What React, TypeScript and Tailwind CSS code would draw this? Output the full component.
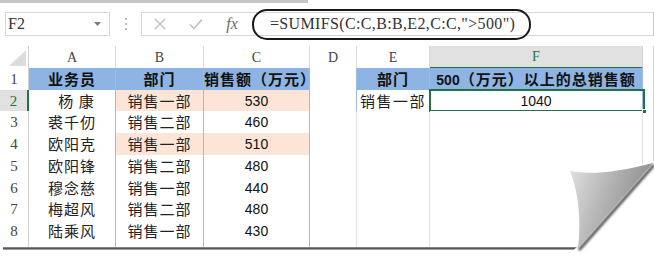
import React from "react";

const serif = "font-['Liberation_Serif','Times_New_Roman',serif]";
const sans = "font-['Liberation_Sans',Arial,sans-serif]";
const cjk = "font-['Noto_Sans_CJK_SC','Noto_Sans_CJK_JP',sans-serif]";
const GRID = "grid grid-cols-[29px_87px_88px_106px_47px_73px_213px_11px]";

const BLUE = "border-r border-b border-[#9cbce3]";
const GRAY = "border-r border-b border-[#e1e1e1]";
const DBLUE = "border-r border-b border-r-[#9cbce3] border-b-[#e1e1e1]";
const RH = "border-r border-b border-r-[#d0d0d0] border-b-[#e1e1e1]";
const GCOL = "border-r border-b border-r-[#d0d0d0] border-b-[#e1e1e1]";

type Row = {
  n: string;
  h: string;
  a: string;
  b: string;
  c: string;
  e?: string;
  f?: string;
  head?: boolean;
  peach?: boolean;
  aPad?: string;
};

const rows: Row[] = [
  { n: "1", h: "h-[22px]", a: "业务员", b: "部门", c: "销售额（万元）", e: "部门", f: "500（万元）以上的总销售额", head: true },
  { n: "2", h: "h-[21px]", a: "杨 康", b: "销售一部", c: "530", e: "销售一部", f: "1040", peach: true, aPad: "pl-[9px]" },
  { n: "3", h: "h-[22px]", a: "裘千仞", b: "销售二部", c: "460" },
  { n: "4", h: "h-[22px]", a: "欧阳克", b: "销售一部", c: "510", peach: true },
  { n: "5", h: "h-[22px]", a: "欧阳锋", b: "销售二部", c: "480" },
  { n: "6", h: "h-[21px]", a: "穆念慈", b: "销售一部", c: "440" },
  { n: "7", h: "h-[22px]", a: "梅超风", b: "销售二部", c: "480" },
  { n: "8", h: "h-[22px]", a: "陆乘风", b: "销售一部", c: "430" },
  { n: "", h: "h-[22px]", a: "", b: "", c: "" },
];

function DataRow({ r }: { r: Row }) {
  const isSel = r.n === "2";
  const inE = r.n === "1" || r.n === "2";
  const cellText = r.head
    ? `${cjk} text-[15px] font-bold tracking-[1px] text-[#111]`
    : `${cjk} text-[15px] tracking-[1px] text-[#222]`;
  const aBg = r.head ? "bg-[#8db4e2]" : "bg-white";
  const bcBg = r.head ? "bg-[#8db4e2]" : r.peach ? "bg-[#fce4d6]" : "bg-white";
  return (
    <div className={`${GRID} ${r.h}`}>
      <div
        className={
          isSel
            ? `border-b border-b-[#e1e1e1] border-r-2 border-r-[#217346] bg-[#e1e1e1] flex items-center justify-center ${serif} text-[15px] text-[#217346]`
            : `${RH} bg-white flex items-center justify-center ${serif} text-[15px] text-[#444]`
        }
      >
        {r.n}
      </div>
      <div className={`${BLUE} ${aBg} flex items-center justify-center ${cellText} ${r.aPad ?? ""} whitespace-pre`}>{r.a}</div>
      <div className={`${BLUE} ${bcBg} flex items-center justify-center ${cellText}`}>{r.b}</div>
      <div
        className={`${BLUE} ${bcBg} flex items-center justify-center ${
          r.head ? cellText : `${sans} text-[14px] text-[#111]`
        }`}
      >
        {r.c}
      </div>
      <div className={`${inE ? DBLUE : GRAY} bg-white`} />
      <div
        className={`${inE ? BLUE : GRAY} ${r.head ? "bg-[#8db4e2]" : "bg-white"} flex items-center justify-center ${
          r.head ? cellText : `${cjk} text-[15px] tracking-[1.5px] text-[#222]`
        }`}
      >
        {r.e ?? ""}
      </div>
      <div
        className={`${inE ? BLUE : GRAY} ${r.head ? "bg-[#8db4e2]" : "bg-white"} relative flex items-center justify-center ${
          r.head ? cellText : `${sans} text-[14px] text-[#111]`
        }`}
      >
        {r.head ? (
          <span>
            <span className={`${sans} text-[14px] font-bold tracking-normal`}>500</span>（万元）以上的总销售额
          </span>
        ) : (
          r.f ?? ""
        )}
        {isSel && (
          <div className="absolute left-[-1px] top-[-1px] w-[216px] h-[23px] border-2 border-[#217346]">
            <div className="absolute right-[-4px] bottom-[-4px] w-[5px] h-[5px] bg-[#217346] border border-white" />
          </div>
        )}
      </div>
      <div className={`${GCOL} bg-white`} />
    </div>
  );
}

export default function App() {
  const colHdr = `flex items-center justify-center ${serif} text-[14px] text-[#444] border-r border-r-[#d9d9d9]`;
  return (
    <div className="relative w-[654px] h-[257px] bg-white overflow-hidden">
      <div className="h-[247px] overflow-hidden">
        <div className="h-[3px] w-[308px] bg-[#c6c6c6]" />
        {/* toolbar */}
        <div className="flex h-[24px] mt-[9px]">
          <div className="ml-[5px] w-[105px] h-full border border-[#d6d6d6] flex items-center justify-between pl-[2px] pr-[8px]">
            <span className={`${serif} text-[16px] text-[#333]`}>F2</span>
            <svg width="7" height="4" viewBox="0 0 7 4">
              <polygon points="0,0 7,0 3.5,4" fill="#7a7a7a" />
            </svg>
          </div>
          <div className="w-[31px] flex flex-col items-center justify-center gap-[3px]">
            <div className="w-[2px] h-[2px] bg-[#bdbdbd]" />
            <div className="w-[2px] h-[2px] bg-[#bdbdbd]" />
            <div className="w-[2px] h-[2px] bg-[#bdbdbd]" />
          </div>
          <div className="relative flex-1 h-full border border-[#d6d6d6] border-r-[#c8c8c8] flex items-center">
            <div className="w-[36px] flex justify-center">
              <svg width="12" height="12" viewBox="0 0 12 12">
                <path d="M1 1 L11 11 M11 1 L1 11" stroke="#bcbcbc" strokeWidth="1.3" />
              </svg>
            </div>
            <div className="w-[36px] flex justify-center">
              <svg width="14" height="12" viewBox="0 0 14 12">
                <path d="M1 6.5 L5 10.5 L13 1.5" stroke="#bcbcbc" strokeWidth="1.5" fill="none" />
              </svg>
            </div>
            <div className={`w-[36px] flex justify-center ${serif} italic text-[16px] text-[#6a6a6a]`}>fx</div>
            <div className={`ml-[20px] ${serif} text-[16px] tracking-[0.35px] text-[#333] whitespace-pre`}>
              =SUMIFS(C:C,B:B,E2,C:C,"&gt;500")
            </div>
            <div className="absolute left-[110px] top-[-4px] w-[279px] h-[31px] rounded-[15px] border-2 border-[#1a1a1a]" />
          </div>
        </div>
        {/* column header */}
        <div className={`${GRID} h-[22px] mt-[10px]`}>
          <div className="border-r border-r-[#d0d0d0] border-b border-b-[#d0d0d0] flex items-end justify-end pr-[2px] pb-[2px]">
            <svg width="17" height="16" viewBox="0 0 17 16">
              <polygon points="17,0 17,16 0,16" fill="#dcdcdc" />
            </svg>
          </div>
          <div className={`${colHdr} border-b border-b-[#9cbce3]`}>A</div>
          <div className={`${colHdr} border-b border-b-[#9cbce3]`}>B</div>
          <div className={`${colHdr} border-b border-b-[#9cbce3]`}>C</div>
          <div className={`${colHdr} border-b border-b-[#d0d0d0]`}>D</div>
          <div className={`${colHdr} border-b border-b-[#9cbce3]`}>E</div>
          <div className={`flex items-center justify-center ${serif} text-[14px] text-[#217346] bg-[#e1e1e1] border-r border-r-[#d0d0d0] border-b-2 border-b-[#217346]`}>
            F
          </div>
          <div className="border-b border-b-[#d0d0d0] border-r border-r-[#d0d0d0]" />
        </div>
        {rows.map((r, i) => (
          <DataRow key={i} r={r} />
        ))}
      </div>
      {/* bottom shadow */}
      <div className="ml-[3px] w-[576px] h-[3px] bg-linear-to-b from-[#9a9a9a] via-[#555555] to-[#c8c8c8]" />
      {/* page curl */}
      <svg className="absolute left-[555px] top-[155px]" width="99" height="102" viewBox="0 0 99 102">
        <defs>
          <linearGradient id="curl" x1="0" y1="0" x2="1" y2="0.35">
            <stop offset="0" stopColor="#e2e2e2" />
            <stop offset="0.45" stopColor="#b8b8b8" />
            <stop offset="1" stopColor="#8a8a8a" />
          </linearGradient>
          <filter id="blur" x="-20%" y="-20%" width="140%" height="140%">
            <feGaussianBlur stdDeviation="1.2" />
          </filter>
        </defs>
        <polygon points="97,6 99,6 99,102 10,102 22,92" fill="#ffffff" />
        <path d="M99,10 L24,95" stroke="#555555" strokeWidth="3" filter="url(#blur)" />
        <path d="M15,16 Q45,22 98,8 L23,93 Q28,50 15,16 Z" fill="url(#curl)" />
      </svg>
    </div>
  );
}
